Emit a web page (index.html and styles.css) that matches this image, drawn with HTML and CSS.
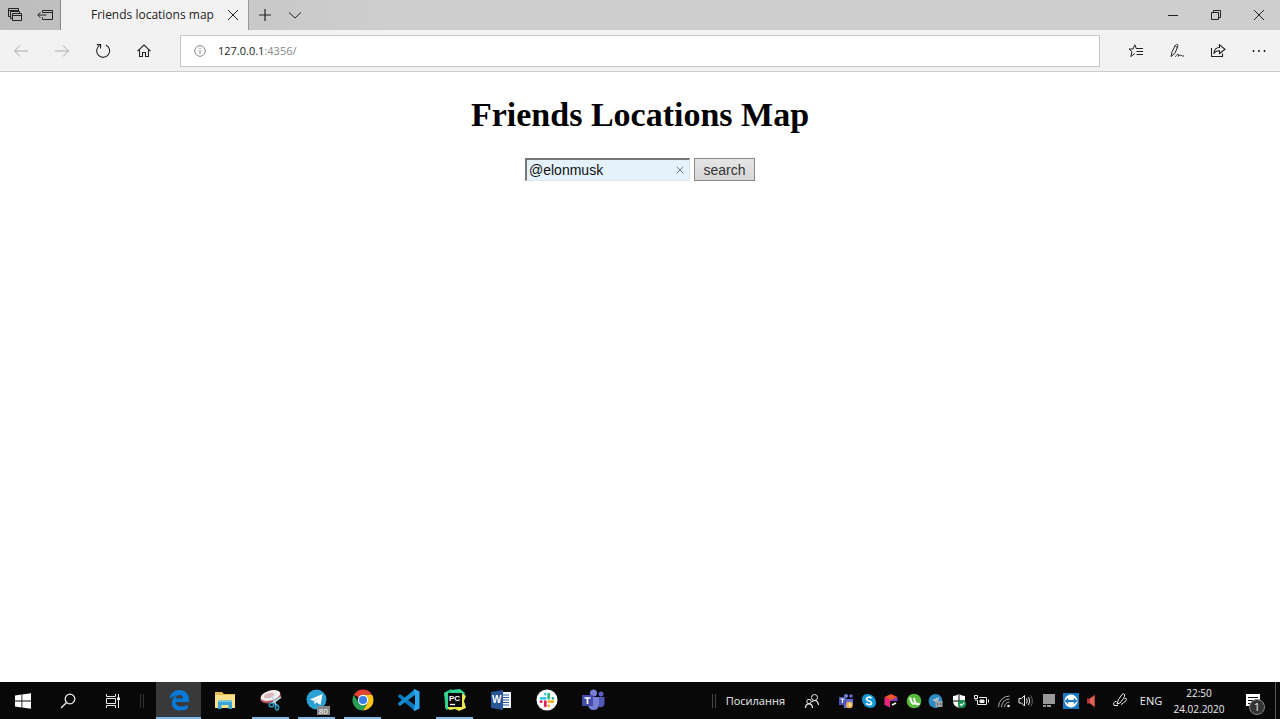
FILE: index.html
```html
<!DOCTYPE html>
<html lang="en">
<head>
<meta charset="utf-8">
<meta name="viewport" content="width=device-width, initial-scale=1">
<title>Friends locations map</title>
<link rel="stylesheet" href="styles.css">
</head>
<body class="desktop">
<header class="titlebar">
  <div class="tab-tools">
    <button class="icon-btn" aria-label="Tabs you've set aside"><svg class="line" width="16" height="16" viewBox="0 0 16 16"><path d="M3.500 9.500H1.500V1.500H11.500V4M1.500 3.500H11.500M5 11.500H3.500V4.500H12.500V6M5.500 6.500H14.500V13.500H5.500ZM5.500 8.500H14.500"/></svg></button>
    <button class="icon-btn" aria-label="Set these tabs aside"><svg class="line" width="16" height="16" viewBox="0 0 16 16"><path d="M5.500 5.500V3.500H15.500V12.500H5.500V10.500M5.500 5.500H15.500M.8 8H9.500M3.500 5.200L.8 8L3.500 10.800"/></svg></button>
  </div>
  <div class="tab">
    <span class="tab-title">Friends locations map</span>
    <button class="icon-btn tab-close" aria-label="Close tab"><svg class="line" width="12" height="12" viewBox="0 0 12 12"><path d="M1 1L11 11M11 1L1 11"/></svg></button>
  </div>
  <button class="icon-btn new-tab" aria-label="New tab"><svg class="line" width="14" height="14" viewBox="0 0 14 14"><path d="M7 1V13M1 7H13" stroke-width="1.200"/></svg></button>
  <button class="icon-btn tab-menu" aria-label="Show tab previews"><svg class="line" width="14" height="14" viewBox="0 0 14 14"><path d="M1 4.500L7 10L13 4.500"/></svg></button>
  <div class="window-controls">
    <button class="icon-btn" aria-label="Minimize"><svg class="line" width="12" height="12" viewBox="0 0 12 12"><path d="M1 6.500H11"/></svg></button>
    <button class="icon-btn" aria-label="Restore"><svg class="line" width="12" height="12" viewBox="0 0 12 12"><path d="M1.500 3.500H8.500V10.500H1.500ZM3.500 3.500V1.500H10.500V8.500H8.500"/></svg></button>
    <button class="icon-btn" aria-label="Close"><svg class="line" width="12" height="12" viewBox="0 0 12 12"><path d="M1 1L11 11M11 1L1 11"/></svg></button>
  </div>
</header>

<nav class="toolbar" aria-label="Browser">
  <div class="nav-buttons">
    <button class="icon-btn muted" aria-label="Back"><svg class="line" width="16" height="16" viewBox="0 0 16 16"><path d="M15 8H1.500M7 2.500L1.500 8L7 13.500"/></svg></button>
    <button class="icon-btn muted" aria-label="Forward"><svg class="line" width="16" height="16" viewBox="0 0 16 16"><path d="M1 8H14.500M9 2.500L14.500 8L9 13.500"/></svg></button>
    <button class="icon-btn" aria-label="Refresh"><svg class="line" width="16" height="16" viewBox="0 0 16 16"><path d="M10.800 1.900A6.500 6.500 0 1 1 4.600 2.400M1.800 1.600H5.600V5.400" stroke-width="1.100"/></svg></button>
    <button class="icon-btn" aria-label="Home"><svg class="line" width="16" height="16" viewBox="0 0 16 16"><path d="M1.500 8.200L8 2L14.500 8.200M3.500 6.800V13.500H6.500V9.500H9.500V13.500H12.500V6.800" stroke-width="1.100"/></svg></button>
  </div>
  <div class="address">
    <svg class="line info" width="12" height="12" viewBox="0 0 12 12"><circle cx="6" cy="6" r="5.300"/><path d="M6 5V9M6 3V4.200"/></svg>
    <span class="url"><span class="host">127.0.0.1</span>:4356/</span>
  </div>
  <div class="page-tools">
    <button class="icon-btn" aria-label="Favorites"><svg class="line" width="16" height="16" viewBox="0 0 16 16"><path d="M8.500 6L6.800 1.800L5 6H1L4 8.700L2.800 13.500L6.800 10.600M8.500 5.500H15M8.500 8.500H15M8.500 11.500H15"/></svg></button>
    <button class="icon-btn" aria-label="Add notes"><svg class="line" width="16" height="16" viewBox="0 0 16 16"><path d="M2 13.500L3.200 8.500L6.200 2.500C7.500 .5 9.500 1.300 8.700 3.700L5.800 10.500L2 13.500ZM6.200 2.500L8.300 4.800M6.500 13.800C9 9.500 10.500 11.500 9.500 13.300C12 10.500 12.500 14 15 12.800"/></svg></button>
    <button class="icon-btn" aria-label="Share"><svg class="line" width="16" height="16" viewBox="0 0 16 16"><path d="M1.500 5V13.500H12.500V10.500M4 10C4.300 6.500 6.500 4.500 9.500 4.500V1.800L15 6.200L9.500 10.500V7.800C7 7.700 5.500 8.500 4 10Z" stroke-width="1.100"/></svg></button>
    <button class="icon-btn" aria-label="Settings and more"><svg width="16" height="16" viewBox="0 0 16 16"><circle cx="2.500" cy="8" r=".9"/><circle cx="8" cy="8" r=".9"/><circle cx="13.500" cy="8" r=".9"/></svg></button>
  </div>
</nav>

<main class="page">
  <h1 class="page-title">Friends Locations Map</h1>
  <form class="search-form">
    <div class="field">
      <input class="field-input" type="text" name="username" aria-label="Username" value="@elonmusk">
      <button class="icon-btn field-clear" type="button" aria-label="Clear"><svg class="line" width="8" height="8" viewBox="0 0 8 8"><path d="M.8 .8L7.200 7.200M7.200 .8L.8 7.200"/></svg></button>
    </div>
    <button class="submit" type="submit">search</button>
  </form>
</main>

<footer class="taskbar">
  <div class="system-buttons">
    <button class="task-btn" aria-label="Start"><svg width="16" height="16" viewBox="0 0 16 16" fill="#fff"><path d="M0 2.500L6.500 1.600V7.600H0ZM7.300 1.500L16 .3V7.600H7.300ZM0 8.400H6.500V14.500L0 13.600ZM7.300 8.400H16V15.800L7.300 14.600Z"/></svg></button>
    <button class="task-btn" aria-label="Search"><svg class="line" width="16" height="16" viewBox="0 0 16 16"><circle cx="10" cy="6" r="4.800" stroke-width="1.300"/><path d="M6.600 9.500L1 15" stroke-width="1.400"/></svg></button>
    <button class="task-btn" aria-label="Task view"><svg class="line" width="16" height="16" viewBox="0 0 16 16"><path d="M1.500 1V3.500H10.500V1M1.500 5.500H10.500V10.500H1.500ZM1.500 15V12.500H10.500V15M13.500 1V15"/><path d="M12 4.500H15V7H12Z" fill="currentColor" stroke="none"/></svg></button>
  </div>
  <span class="grip"></span>
  <div class="apps">
    <button class="app current" aria-label="Microsoft Edge"><svg width="22" height="22" viewBox="0 0 22 22" fill="#0879d6"><path d="M1.500 10.200C2.200 4.500 6 1 11.300 1C17.500 1 21 5.300 21 10.500V13H7.600C7.700 16 10 17.500 13.200 17.500C15.700 17.500 17.800 16.900 19.700 15.800V19.800C17.500 20.900 15.100 21.500 12.500 21.500C7.300 21.500 3.800 18.600 3.800 13.900C3.800 10.500 5.500 8.100 8.500 6.500C5.700 6.800 3.500 8 1.500 10.200ZM7.700 9.400H14.900C14.900 7.300 13.700 6.100 11.600 6.100C9.500 6.100 8.200 7.300 7.700 9.400Z"/></svg></button>
    <button class="app" aria-label="File Explorer"><svg width="22" height="22" viewBox="0 0 22 22"><path d="M1 3H8L10 5H21V19H1Z" fill="#e8bd4d"/><path d="M1 6H21V19H1Z" fill="#fbe08b"/><path d="M4 20V12.500Q4 11.500 5 11.500H17Q18 11.500 18 12.500V20H14.500V16H7.500V20Z" fill="#38a5d8"/><path d="M5 11.500H17L18 13H4Z" fill="#73c8e8"/></svg></button>
    <button class="app running" aria-label="Snipping Tool"><svg width="24" height="22" viewBox="0 0 24 22"><ellipse cx="11.500" cy="8" rx="10.500" ry="6" transform="rotate(-16 11.500 8)" fill="#b05662"/><ellipse cx="11.500" cy="6.500" rx="10" ry="5" transform="rotate(-16 11.500 6.500)" fill="#f5eeee"/><ellipse cx="10" cy="6.500" rx="5.500" ry="2.500" transform="rotate(-16 10 6.500)" fill="#d9b9bb"/><path d="M13 7L17.500 17M22 8L13 14.500" stroke="#b5dce9" stroke-width="1.700"/><g fill="none" stroke="#2d92b8" stroke-width="1.600"><ellipse cx="12.500" cy="16" rx="2.300" ry="1.800"/><ellipse cx="18" cy="18.500" rx="1.600" ry="2.400"/></g></svg></button>
    <button class="app running" aria-label="Telegram, 80 unread"><svg width="22" height="22" viewBox="0 0 22 22"><circle cx="10.500" cy="10.500" r="10" fill="#2aa0d5"/><path d="M4 10.500L16.500 5L14.500 16L10.500 13.300L8.500 15.200L8 12Z" fill="#fff"/><path d="M8 12L14 7.500L9.300 12.700L8.500 15.200Z" fill="#b9d5e4"/></svg><span class="unread">80</span></button>
    <button class="app running" aria-label="Google Chrome"><svg width="22" height="22" viewBox="0 0 22 22"><path d="M11 11L1.900 5.750A10.500 10.500 0 0 1 20.090 5.750L11 5.750Z" fill="#e34133"/><path d="M11 5.750H20.090A10.500 10.500 0 0 1 11 21.500L15.550 13.620Z" fill="#fbc51c"/><path d="M1.900 5.750L6.450 13.620L15.550 13.620L11 21.500A10.500 10.500 0 0 1 1.900 5.750Z" fill="#27a055"/><circle cx="11" cy="11" r="5.200" fill="#fff"/><circle cx="11" cy="11" r="4.100" fill="#397fe5"/></svg></button>
    <button class="app" aria-label="Visual Studio Code"><svg width="24" height="24" viewBox="0 0 24 24"><path d="M1.200 7.500L3 6L18 17V23L1.200 9Z" fill="#0a75bd"/><path d="M1.200 16.500L3 18L18 7V1L1.200 15Z" fill="#168bd1"/><path d="M17.500 1L22.500 3.500V20.500L17.500 23L16.500 22L18 17V7L16.500 2Z" fill="#29a6ed"/></svg></button>
    <button class="app running" aria-label="PyCharm"><svg width="24" height="24" viewBox="0 0 24 24"><path d="M1 5L8 1L11 5L9 20L3 22L2 15Z" fill="#20c58b"/><path d="M8 2L17 1L22 5L20 12L8 8Z" fill="#35d394"/><path d="M20 6L23 8L21 13L23 20L16 23L12 21L7 22L2 19L4 14Z" fill="#e9e84f"/><path d="M1 5L5 3V21L2 20L3 12Z" fill="#35d58e"/><path d="M5 5H19V19H5Z" fill="#080808"/><text class="logo-pc" x="6" y="13">PC</text><path d="M7 16.500H12" stroke="#fff" stroke-width="1.300"/></svg></button>
    <button class="app" aria-label="Word"><svg width="22" height="22" viewBox="0 0 22 22"><path d="M11 3H21V19H11Z" fill="#f5f8fc"/><path d="M13 6H19M13 8.500H19M13 11H19M13 13.500H19M13 16H19" stroke="#2c5a9b"/><path d="M1 3L13 1V21L1 19Z" fill="#285595"/><text class="logo-word" x="2" y="14">W</text></svg></button>
    <button class="app" aria-label="Slack"><svg width="22" height="22" viewBox="0 0 22 22"><circle cx="11" cy="11" r="10.500" fill="#fff"/><g fill="none" stroke-width="2.700" stroke-linecap="round"><path d="M9.300 5V5.200M5 9.300H9.300" stroke="#36c5f0"/><path d="M12.700 5V9.300M17 9.300H16.800" stroke="#2eb67d"/><path d="M12.700 17V16.800M12.700 12.700H17" stroke="#ecb22e"/><path d="M9.300 17V12.700M5 12.700H5.200" stroke="#e01e5a"/></g></svg></button>
    <button class="app" aria-label="Microsoft Teams"><svg width="24" height="22" viewBox="0 0 24 22"><circle cx="12.500" cy="4" r="3.500" fill="#7780d5"/><circle cx="20" cy="5" r="2.500" fill="#5960bd"/><path d="M16 8H23.500V15Q22.500 19 18 18Z" fill="#5059b8"/><path d="M7 8H18V15.500Q17.500 21 12.500 21Q8 21 7 16Z" fill="#7780d5"/><path d="M1 6H12V17H1Z" fill="#434baa"/><path d="M3.500 9H9.500M6.500 9V15" stroke="#fff" stroke-width="1.700"/></svg></button>
  </div>

  <span class="grip links-grip"></span>
  <button class="links">Посилання</button>
  <button class="people" aria-label="People"><svg class="line" width="16" height="16" viewBox="0 0 16 16"><circle cx="10.500" cy="4.500" r="3"/><circle cx="5" cy="8.500" r="2.200"/><path d="M1.500 15Q1.500 10.800 5 10.800Q8.500 10.800 8.500 15M8 9Q9 7.500 10.500 7.500Q14 7.500 14.500 12" stroke-width="1.200"/></svg></button>
  <div class="tray">
    <svg width="16" height="16" viewBox="0 0 16 16"><circle cx="8" cy="3" r="2" fill="#7780d5"/><circle cx="13" cy="3" r="1.800" fill="#656dcc"/><path d="M5 6H15V11L11 15H6Z" fill="#656dcc"/><path d="M1 4H8V12H1Z" fill="#4a52b4"/><path d="M2.500 6H6.500M4.500 6V10" stroke="#fff" stroke-width="1.200"/><circle cx="11.500" cy="12" r="3.300" fill="#f4b548"/><path d="M11.500 10V12.500H13" stroke="#fff" fill="none"/></svg>
    <svg width="16" height="16" viewBox="0 0 16 16"><circle cx="6" cy="6" r="5" fill="#1597d7"/><circle cx="10" cy="10" r="5" fill="#1597d7"/><circle cx="8" cy="8" r="6.500" fill="#1597d7"/><path d="M10.500 5.300C9 3.500 5.500 4 5.600 6.200C5.700 8.400 10.400 7.500 10.500 9.900C10.500 12.200 6.500 12.300 5.200 10.300" fill="none" stroke="#fff" stroke-width="1.700"/></svg>
    <svg width="16" height="16" viewBox="0 0 16 16"><path d="M1.500 4L8 1L14.500 4L8 8Z" fill="#ef562d"/><path d="M1.500 4L8 7V15L1.500 12Z" fill="#e9247a"/><path d="M8 7L14.500 4V8L8 14Z" fill="#853bbd"/><path d="M7 8H15V16H7Z" fill="#0b0b0b"/><path d="M9 12L13 10" stroke="#fff" stroke-width="1.500"/></svg>
    <svg width="16" height="16" viewBox="0 0 16 16"><circle cx="8" cy="8" r="7.300" fill="#58b93a"/><path d="M4 4.500L5.500 9Q7 12 9.200 9.800L8 5M9.200 9.800Q10.500 12 13.500 10.500" fill="none" stroke="#fff" stroke-width="2"/></svg>
    <svg width="16" height="16" viewBox="0 0 16 16"><circle cx="7.500" cy="8" r="7" fill="#2d8ac0"/><path d="M4 7L11 4L10 11L7.500 9Z" fill="#aac2d0"/><path d="M7.500 8H14.500V14H7.500Z" fill="#9da3a7"/><path d="M9.500 10V12M12.500 10V12" stroke="#60676c"/></svg>
    <svg width="16" height="16" viewBox="0 0 16 16"><path d="M8 1Q11 3 14 3V8Q14 13 8 15Q2 13 2 8V3Q5 3 8 1Z" fill="#fff"/><path d="M8 1V15M2 8H14" stroke="#080808"/><circle cx="11" cy="11" r="4" fill="#179251"/><path d="M9 11L10.500 12.500L13.200 9.700" fill="none" stroke="#fff" stroke-width="1.200"/></svg>
    <svg class="line" width="16" height="16" viewBox="0 0 16 16"><path d="M6 4.500H13.500V11.500H4.500V7M15.500 6.500V9.500M1.500 2.500H4.500V5.500H1.500ZM3 5.500V8"/><path d="M7 7H11V9.500H7Z" fill="currentColor"/></svg>
    <svg class="line" width="16" height="16" viewBox="0 0 16 16"><path d="M2.500 14A11 11 0 0 1 13.500 3M5.500 14A8 8 0 0 1 13.500 6M8.500 14A5 5 0 0 1 13.500 9" stroke="#aaa"/><circle cx="12.500" cy="13" r="1.300" fill="currentColor" stroke="none"/></svg>
    <svg class="line" width="16" height="16" viewBox="0 0 16 16"><path d="M1 5.500H3.500L6.500 2.500V13L3.500 10H1ZM8.500 5.500Q10 8 8.500 10.500M10.500 4Q13 8 10.500 12"/><path d="M12.700 2.500Q16 8 12.700 13.500" stroke="#666"/></svg>
    <svg width="16" height="16" viewBox="0 0 16 16" fill="#999"><path d="M2 1H14V11H2ZM2 12H5V14H2ZM6 12H10V14H6Z"/></svg>
    <svg width="16" height="16" viewBox="0 0 16 16"><path d="M0 0H16V16H0Z" fill="#1b78c5"/><circle cx="8" cy="8" r="6.500" fill="#fff"/><path d="M1.700 8L5.200 4.800V7H10.800V4.800L14.300 8L10.800 11.200V9H5.200V11.200Z" fill="#1b78c5"/></svg>
    <svg width="16" height="16" viewBox="0 0 16 16"><path d="M1 5.500H4L9 1.500V14.500L4 10.500H1Z" fill="#b93932"/><path d="M4 5.500L8 3V13L4 10Z" fill="#dc665c"/></svg>
  </div>
  <button class="ink" aria-label="Windows Ink Workspace"><svg class="line" width="18" height="18" viewBox="0 0 18 18"><path d="M6 12L7.500 7.500L11 2.500Q12.500 1 13.500 2.500Q14 4 12.500 6.500L9 11ZM13.500 6.500Q17 6 14.500 9Q12.500 11.500 10 12.500M5.500 9.500H4Q1.500 11 3 13.500H7"/></svg></button>
  <button class="language">ENG</button>
  <button class="clock"><time>22:50</time><time>24.02.2020</time></button>
  <button class="notifications" aria-label="Notifications"><svg width="18" height="18" viewBox="0 0 18 18"><path d="M2 2H16V14H9L6 17V14H2Z" fill="#fff"/><path d="M4 5.500H14M4 8.500H14M4 11.500H10" stroke="#111"/></svg><span class="count">1</span></button>
  <span class="show-desktop"></span>
</footer>
</body>
</html>
```
FILE: styles.css
```css
* { box-sizing: border-box; }

.desktop {
  display: flex;
  flex-direction: column;
  min-height: 100vh;
  margin: 0;
  background: #fff;
  color: #222;
  font: 12px/16px "Open Sans", "Noto Sans", sans-serif;
}

button {
  margin: 0;
  padding: 0;
  border: 0;
  background: none;
  color: inherit;
  font: inherit;
}

svg { display: block; flex: none; }

.line { fill: none; stroke: currentColor; stroke-width: 1; }

.icon-btn { display: flex; align-items: center; justify-content: center; }

/* Title bar */
.titlebar {
  display: flex;
  height: 30px;
  background: linear-gradient(to right, #bdbdbd, #cecece 30%, #cecece);
}

.tab-tools {
  display: flex;
  align-items: center;
  justify-content: space-between;
  width: 61px;
  padding: 0 7px;
  border-right: 1px solid #888;
}

.tab {
  display: flex;
  align-items: center;
  justify-content: space-between;
  width: 188px;
  padding: 0 9px 0 30px;
  border-right: 1px solid #999;
  background: #f2f2f2;
}

.tab-title { white-space: nowrap; }

.new-tab { width: 31px; }

.tab-menu { width: 29px; }

.window-controls {
  display: grid;
  grid-template-columns: repeat(3, 43px);
  margin-left: auto;
}

/* Toolbar */
.toolbar {
  display: flex;
  align-items: center;
  height: 42px;
  border-bottom: 1px solid #ccc;
  background: #f2f2f2;
}

.nav-buttons { display: grid; grid-template-columns: repeat(4, 41px); width: 180px; }

.muted { color: #aaa; }

.address {
  display: flex;
  flex: 1;
  align-items: center;
  gap: 12px;
  height: 32px;
  padding: 0 13px;
  border: 1px solid #c6c6c6;
  background: #fff;
  font-size: 11px;
}

.info, .url { color: #888; }

.host { color: #222; }

.page-tools {
  display: grid;
  grid-template-columns: repeat(4, 41px);
  width: 180px;
  padding-left: 15px;
}

/* Page */
.page { flex: 1; padding: 22px 8px; text-align: center; }

.page-title {
  margin: 0 0 22px;
  color: #000;
  font: bold 34px/42px "Liberation Serif", serif;
}

.search-form {
  display: flex;
  justify-content: center;
  gap: 4px;
  font: 14px/16px "Liberation Sans", sans-serif;
}

.field {
  display: flex;
  width: 165px;
  height: 23px;
  border: 1px solid #dde5ea;
  border-top: 2px solid #777;
  border-left: 2px solid #777;
  background: #e5f2fb;
}

.field-input {
  flex: 1;
  min-width: 0;
  padding: 0 2px;
  border: 0;
  outline: 0;
  background: none;
  color: #111;
  font: inherit;
}

.field-clear { width: 18px; color: #777; }

.submit {
  width: 61px;
  height: 23px;
  border: 1px solid #888;
  background: linear-gradient(#e6e6e6, #d6d6d6);
  color: #333;
}

/* Taskbar */
.taskbar {
  display: flex;
  align-items: stretch;
  height: 37px;
  background: #080808;
  color: #eee;
  font-size: 11px;
}

.taskbar button { display: flex; align-items: center; justify-content: center; }

.system-buttons { display: grid; grid-template-columns: repeat(3, 45px); }

.grip {
  align-self: center;
  width: 4px;
  height: 14px;
  margin: 0 12px 0 5px;
  border: solid #333;
  border-width: 0 1px;
}

.apps { display: grid; grid-template-columns: repeat(10, 46px); }

.taskbar .app {
  position: relative;
  width: 45px;
  border-bottom: 2px solid transparent;
}

.taskbar .current { border-color: #76b9ed; background: #393939; }

.taskbar .running { width: 37px; margin-left: 4px; border-color: #76b9ed; }

.unread {
  position: absolute;
  right: 5px;
  bottom: 2px;
  padding: 0 2px;
  background: #888;
  color: #fff;
  font-size: 8px;
  line-height: 9px;
}

.logo-pc { fill: #fff; font: bold 8px "Liberation Sans", sans-serif; }

.logo-word { fill: #fff; font: bold 10px "Liberation Sans", sans-serif; }

.links-grip { margin: 0 10px 0 auto; border-color: #444; }

.taskbar .links { padding-right: 4px; }

.people { width: 46px; }

.tray {
  display: grid;
  grid-template-columns: repeat(12, 1fr);
  place-items: center;
  width: 270px;
}

.ink { width: 30px; }

.language { width: 32px; }

.taskbar .clock {
  flex-direction: column;
  width: 64px;
  font-size: 10px;
}

.taskbar .notifications { position: relative; width: 44px; }

.count {
  position: absolute;
  right: 10px;
  bottom: 4px;
  width: 16px;
  border: 1px solid #888;
  border-radius: 50%;
  background: #333;
  font-size: 11px;
  line-height: 14px;
  text-align: center;
}

.show-desktop { width: 5px; border-left: 1px solid #555; }
```
